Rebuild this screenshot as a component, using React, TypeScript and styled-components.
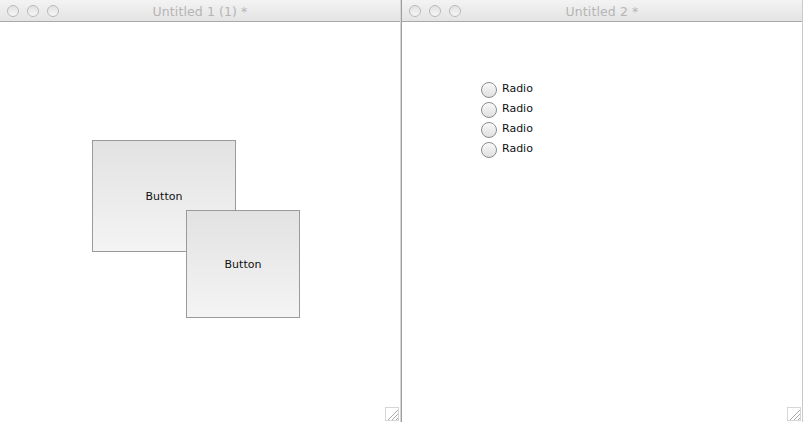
import React from "react";
import styled, { createGlobalStyle } from "styled-components";

const Global = createGlobalStyle`
  html, body { margin: 0; padding: 0; background: #ffffff; }
  body { width: 804px; height: 422px; overflow: hidden; font-family: "DejaVu Sans", "Liberation Sans", sans-serif; }
`;

const Desktop = styled.div`
  display: flex;
  width: 804px;
  height: 422px;
  background: #ffffff;
`;

const Window = styled.div<{ $w: number; $rightBorder?: boolean }>`
  display: flex;
  flex-direction: column;
  width: ${(p) => p.$w}px;
  height: 422px;
  box-sizing: border-box;
  border-right: ${(p) => (p.$rightBorder ? "1px solid #c9c9c9" : "none")};
  background: #ffffff;
`;

const Divider = styled.div`
  width: 2px;
  height: 422px;
  background: linear-gradient(to right, #d6d6d6 0 1px, #9e9e9e 1px 2px);
`;

const TitleBar = styled.div`
  position: relative;
  display: flex;
  align-items: center;
  justify-content: center;
  height: 21px;
  flex: none;
  border-bottom: 1px solid #a8a8a8;
  background: linear-gradient(#f3f3f3, #e4e4e4);
`;

const Lights = styled.div`
  position: absolute;
  left: 7px;
  top: 5px;
  display: flex;
  gap: 8px;
`;

const Light = styled.span`
  width: 12px;
  height: 12px;
  border-radius: 50%;
  box-sizing: border-box;
  border: 1px solid #b9b9b9;
  background: linear-gradient(#e2e2e2, #f6f6f6);
`;

const Title = styled.span`
  font-family: "DejaVu Sans", sans-serif;
  font-size: 12.5px;
  color: #b5b5b5;
  letter-spacing: 0.1px;
  margin-top: 1px;
`;

const Canvas = styled.div`
  position: relative;
  flex: 1;
  background: #ffffff;
`;

const Btn = styled.div<{ $x: number; $y: number; $w: number; $h: number }>`
  position: absolute;
  left: ${(p) => p.$x}px;
  top: ${(p) => p.$y}px;
  width: ${(p) => p.$w}px;
  height: ${(p) => p.$h}px;
  box-sizing: border-box;
  border: 1px solid #9a9a9a;
  background: linear-gradient(#e2e2e2, #f4f4f4);
  display: flex;
  align-items: center;
  justify-content: center;
  font-size: 11px;
  color: #111;
`;

const RadioGroup = styled.div`
  position: absolute;
  left: 79px;
  top: 58px;
  display: flex;
  flex-direction: column;
  gap: 4px;
`;

const RadioRow = styled.label`
  display: flex;
  align-items: center;
  gap: 5px;
  height: 16px;
  font-size: 11px;
  color: #111;
`;

const RadioDot = styled.span`
  width: 16px;
  height: 16px;
  margin-top: 3px;
  border-radius: 50%;
  box-sizing: border-box;
  border: 1px solid #8c8c8c;
  background: linear-gradient(#f8f8f8, #e0e0e0);
  box-shadow: inset 0 1px 1px rgba(255, 255, 255, 0.8);
`;

const Grip = styled.svg`
  position: absolute;
  right: 1px;
  bottom: 1px;
`;

function ResizeGrip() {
  return (
    <Grip width="14" height="14" viewBox="0 0 14 14">
      <rect x="0.5" y="0.5" width="13" height="13" fill="#ffffff" stroke="#d6d6d6" />
      <g stroke="#a8a8a8" strokeWidth="1">
        <line x1="3" y1="13" x2="13" y2="3" />
        <line x1="7" y1="13" x2="13" y2="7" />
        <line x1="11" y1="13" x2="13" y2="11" />
      </g>
    </Grip>
  );
}

function Bar({ title }: { title: string }) {
  return (
    <TitleBar>
      <Lights>
        <Light />
        <Light />
        <Light />
      </Lights>
      <Title>{title}</Title>
    </TitleBar>
  );
}

export default function App() {
  return (
    <>
      <Global />
      <Desktop>
        <Window $w={400}>
          <Bar title="Untitled 1 (1) *" />
          <Canvas>
            <Btn $x={92} $y={118} $w={144} $h={112}>Button</Btn>
            <Btn $x={186} $y={188} $w={114} $h={108}>Button</Btn>
            <ResizeGrip />
          </Canvas>
        </Window>
        <Divider />
        <Window $w={401} $rightBorder>
          <Bar title="Untitled 2 *" />
          <Canvas>
            <RadioGroup>
              {[0, 1, 2, 3].map((i) => (
                <RadioRow key={i}>
                  <RadioDot />
                  Radio
                </RadioRow>
              ))}
            </RadioGroup>
            <ResizeGrip />
          </Canvas>
        </Window>
      </Desktop>
    </>
  );
}
